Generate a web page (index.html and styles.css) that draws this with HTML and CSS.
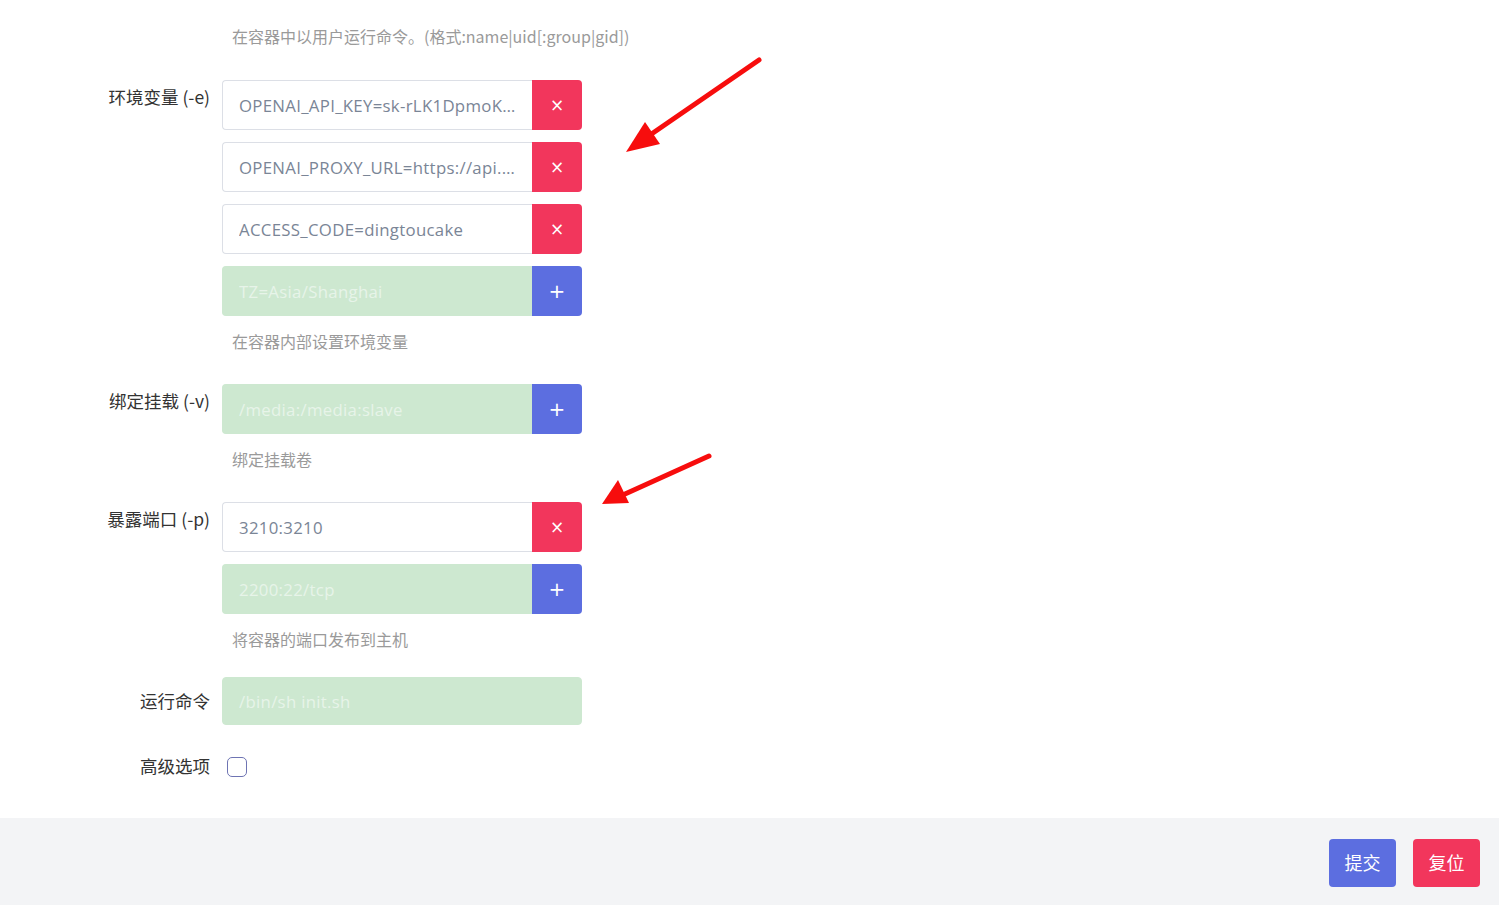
FILE: index.html
```html
<!DOCTYPE html>
<html lang="zh-CN">
<head>
    <meta charset="UTF-8">
    <title>容器配置</title>
    <link rel="stylesheet" href="styles.css">
</head>
<body>
    <div class="page">
        <form class="form">
            <div class="form-row">
                <div class="label"></div>
                <div class="field">
                    <p class="help first">在容器中以用户运行命令。(格式:name|uid[:group|gid])</p>
                </div>
            </div>

            <!-- Environment variables -->
            <div class="form-row">
                <label class="label">环境变量 (-e)</label>
                <div class="field">
                    <div class="input-group">
                        <input type="text" value="OPENAI_API_KEY=sk-rLK1DpmoKq8Hd3fXy2QwLz0">
                        <button type="button" class="btn-remove">&times;</button>
                    </div>
                    <div class="input-group">
                        <input type="text" value="OPENAI_PROXY_URL=https://api.chatanywhere.com">
                        <button type="button" class="btn-remove">&times;</button>
                    </div>
                    <div class="input-group">
                        <input type="text" value="ACCESS_CODE=dingtoucake">
                        <button type="button" class="btn-remove">&times;</button>
                    </div>
                    <div class="input-group">
                        <input type="text" class="new" placeholder="TZ=Asia/Shanghai">
                        <button type="button" class="btn-add">+</button>
                    </div>
                    <p class="help">在容器内部设置环境变量</p>
                </div>
            </div>

            <!-- Volumes -->
            <div class="form-row">
                <label class="label">绑定挂载 (-v)</label>
                <div class="field">
                    <div class="input-group">
                        <input type="text" class="new" placeholder="/media:/media:slave">
                        <button type="button" class="btn-add">+</button>
                    </div>
                    <p class="help">绑定挂载卷</p>
                </div>
            </div>

            <!-- Ports -->
            <div class="form-row">
                <label class="label">暴露端口 (-p)</label>
                <div class="field">
                    <div class="input-group">
                        <input type="text" value="3210:3210">
                        <button type="button" class="btn-remove">&times;</button>
                    </div>
                    <div class="input-group">
                        <input type="text" class="new" placeholder="2200:22/tcp">
                        <button type="button" class="btn-add">+</button>
                    </div>
                    <p class="help">将容器的端口发布到主机</p>
                </div>
            </div>

            <div class="form-row center cmd-row">
                <label class="label">运行命令</label>
                <div class="field flexed">
                    <input type="text" class="new single" placeholder="/bin/sh init.sh">
                </div>
            </div>

            <div class="form-row center adv-row">
                <label class="label" for="advanced">高级选项</label>
                <div class="field flexed">
                    <input type="checkbox" id="advanced" class="check">
                </div>
            </div>
        </form>

        <!-- annotation arrows -->
        <svg class="arrows" width="1499" height="905" viewBox="0 0 1499 905">
            <line x1="759" y1="60" x2="650" y2="135" stroke="#f70d0d" stroke-width="5" stroke-linecap="round"/>
            <polygon points="626,152 645,122 660,144" fill="#f70d0d"/>
            <line x1="709" y1="456" x2="625" y2="494" stroke="#f70d0d" stroke-width="5" stroke-linecap="round"/>
            <polygon points="602,504 618,480 629,503" fill="#f70d0d"/>
        </svg>
    </div>

    <div class="footer">
        <button type="button" class="btn btn-submit">提交</button>
        <button type="button" class="btn btn-reset">复位</button>
    </div>
</body>
</html>
```

FILE: styles.css
```css
/* General Styles */
body {
    margin: 0;
    font-family: "Open Sans", "Noto Sans CJK SC", sans-serif;
    color: #333;
    background: #fff;
}

.page {
    height: 818px;
    box-sizing: border-box;
    padding-top: 26px;
    position: relative;
}

.form-row {
    display: grid;
    grid-template-columns: 210px 360px;
    column-gap: 12px;
    margin-bottom: 33px;
}

.label {
    text-align: right;
    font-size: 17.5px;
    line-height: 20px;
    padding-top: 7px;
    color: #333;
    font-family: "Noto Sans CJK SC", "Open Sans", sans-serif;
    white-space: nowrap;
}

.form-row.center {
    align-items: center;
}

.form-row.center .label {
    padding-top: 0;
}

.field.flexed {
    display: flex;
    align-items: center;
}

.help {
    margin: 15px 0 0 10px;
    font-size: 16px;
    line-height: 20px;
    color: #9a9a9a;
    font-family: "Noto Sans CJK SC", "Open Sans", sans-serif;
    white-space: nowrap;
}

.help.first {
    margin-top: 0;
    margin-bottom: 1px;
}

/* Input groups */
.input-group {
    display: flex;
    height: 50px;
    margin-bottom: 12px;
}

.input-group:last-of-type {
    margin-bottom: 0;
}

.input-group input,
input.single {
    flex: 1;
    min-width: 0;
    box-sizing: border-box;
    border: 1px solid #dcdfe6;
    border-right: none;
    border-radius: 4px 0 0 4px;
    padding: 0 16px;
    font-family: "Open Sans", sans-serif;
    font-size: 16.8px;
    letter-spacing: 0.3px;
    color: #7a8596;
    background: #fff;
    outline: none;
    text-overflow: ellipsis;
}

input.new {
    background: #cde8d0;
    border-color: #cde8d0;
}

input.new::placeholder {
    color: #e7f4e9;
}

input.single {
    width: 360px;
    flex: none;
    height: 48px;
    border-right: 1px solid #cde8d0;
    border-radius: 4px;
}

.cmd-row {
    margin-top: -5px;
    margin-bottom: 32px;
}

.adv-row .label {
    margin-top: -3px;
}

.input-group button {
    width: 50px;
    border: none;
    border-radius: 0 4px 4px 0;
    color: #fff;
    font-family: "DejaVu Sans", sans-serif;
    cursor: pointer;
    padding: 0;
}

.btn-remove {
    background: #f2365c;
    font-size: 17px;
}

.btn-add {
    background: #5c6ee0;
    font-size: 20px;
}

.check {
    appearance: none;
    margin: 0 0 0 5px;
    width: 20px;
    height: 20px;
    border: 1.5px solid #6e74b3;
    border-radius: 5px;
    background: #fff;
}

.arrows {
    position: absolute;
    left: 0;
    top: 0;
    pointer-events: none;
}

/* Footer */
.footer {
    height: 87px;
    background: #f3f4f6;
    display: flex;
    justify-content: flex-end;
    align-items: flex-start;
    gap: 17px;
    padding: 21px 19px 0 0;
    box-sizing: border-box;
}

.btn {
    width: 67px;
    height: 48px;
    border: none;
    border-radius: 4px;
    color: #fff;
    font-size: 18px;
    line-height: 1;
    padding: 0 0 3px;
    font-family: "Noto Sans CJK SC", sans-serif;
    cursor: pointer;
}

.btn-submit {
    background: #5c6ee0;
}

.btn-reset {
    background: #f2365c;
}
```
